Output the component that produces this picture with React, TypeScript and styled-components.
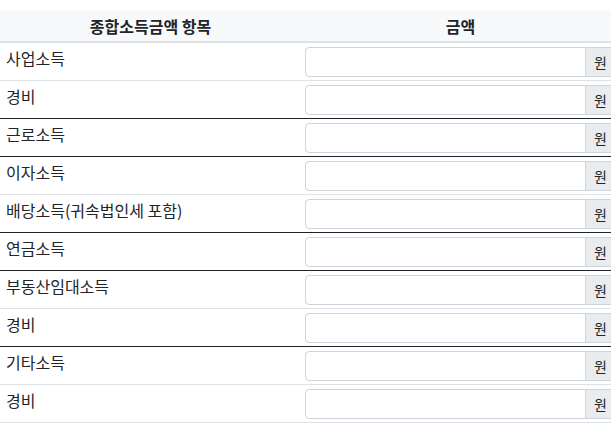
import styled, { createGlobalStyle } from "styled-components";

const GlobalStyle = createGlobalStyle`
  html, body {
    margin: 0;
    padding: 0;
    overflow: hidden;
    background: #fff;
  }
  body {
    font-family: "Noto Sans CJK KR", "Noto Sans", sans-serif;
    color: #212529;
  }
`;

const Table = styled.div`
  width: 620px;
  margin-top: 10px;
  font-size: 16px;
`;

const HeadRow = styled.div`
  display: grid;
  grid-template-columns: 301px 319px;
  height: 31px;
  background: #f8f9fa;
  border-bottom: 2px solid #dee2e6;
  font-weight: 700;
  align-items: center;
  text-align: center;
`;

const Row = styled.div<{ $strong?: boolean }>`
  display: grid;
  grid-template-columns: 301px 319px;
  height: 37px;
  border-bottom: 1px solid ${(p) => (p.$strong ? "#212529" : "#dee2e6")};
`;

const Label = styled.div`
  padding: 3px 6px 0;
  line-height: 24px;
`;

const AmountCell = styled.div`
  padding: 4px 4px 0;
`;

const InputGroup = styled.div`
  display: flex;
  height: 30px;
`;

const Input = styled.input`
  flex: 1;
  min-width: 0;
  height: 100%;
  box-sizing: border-box;
  border: 1px solid #ced4da;
  border-radius: 4px 0 0 4px;
  padding: 0 8px;
  font: inherit;
  outline: none;
`;

const Addon = styled.span`
  display: flex;
  align-items: center;
  box-sizing: border-box;
  padding: 0 8px;
  background: #e9ecef;
  border: 1px solid #ced4da;
  border-left: none;
  border-radius: 0 4px 4px 0;
  font-size: 14px;
  color: #212529;
`;

const items = [
  { name: "사업소득", strong: false },
  { name: "경비", strong: true },
  { name: "근로소득", strong: true },
  { name: "이자소득", strong: false },
  { name: "배당소득(귀속법인세 포함)", strong: true },
  { name: "연금소득", strong: true },
  { name: "부동산임대소득", strong: false },
  { name: "경비", strong: true },
  { name: "기타소득", strong: false },
  { name: "경비", strong: false },
];

const App = () => {
  return (
    <>
      <GlobalStyle />
      <Table>
        <HeadRow>
          <div>종합소득금액 항목</div>
          <div>금액</div>
        </HeadRow>
        {items.map((item, i) => (
          <Row key={i} $strong={item.strong}>
            <Label>{item.name}</Label>
            <AmountCell>
              <InputGroup>
                <Input type="text" />
                <Addon>원</Addon>
              </InputGroup>
            </AmountCell>
          </Row>
        ))}
      </Table>
    </>
  );
};

export default App;
